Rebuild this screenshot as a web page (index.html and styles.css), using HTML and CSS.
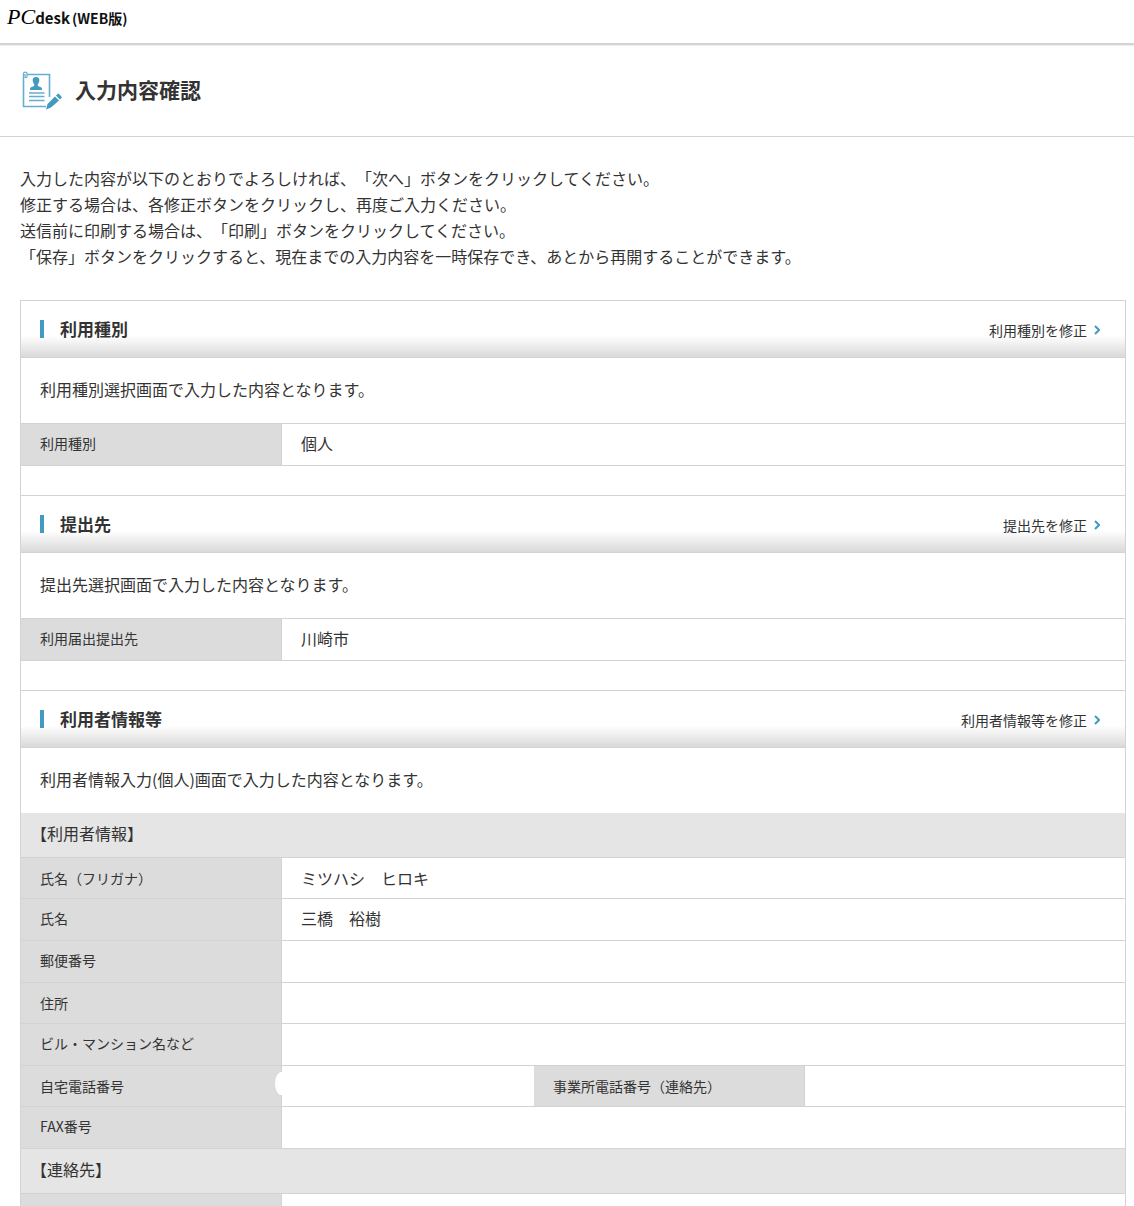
FILE: index.html
```html
<!DOCTYPE html>
<html lang="ja">
<head>
    <meta charset="UTF-8">
    <meta name="viewport" content="width=device-width, initial-scale=1.0">
    <title>入力内容確認</title>
    <link rel="stylesheet" href="styles.css">
</head>
<body>
    <header class="header">
        <div class="logo"><span class="logo-pc">PC</span><span class="logo-desk">desk</span><span class="logo-web">(WEB版)</span></div>
    </header>
    <div class="title-bar">
        <svg class="title-icon" width="40" height="40" viewBox="0 0 40 40" fill="none">
            <path d="M5 3.5H27.500V26M24 35.5H1.5V6" stroke="#66aecb" stroke-width="1.6"/>
            <path d="M1.5 7V2.5C1.5 .6 5 .6 5 2.5V5.5C5 7 3 7 3 5.5V3" stroke="#66aecb" stroke-width="1.2"/>
            <path d="M14 6C16.500 6 17.500 7.500 17.300 9.500C17.200 11.500 16.300 12.500 15.800 13.300V15L19 16.300C20 16.800 20 18 20 19H8C8 18 8 16.800 9 16.300L12.200 15V13.300C11.700 12.500 10.800 11.500 10.700 9.500C10.500 7.500 11.500 6 14 6Z" fill="#439ac0"/>
            <path d="M7 22H22.500M7 25.500H22.500M7 29.500H22.500" stroke="#66aecb" stroke-width="1.5"/>
            <path d="M24 38.500L25.500 33L33 25.500L37 29.500L29 36.500ZM34 24.500L35.500 23C36.500 22 40.500 26 39.500 27L38 28.500Z" fill="#439ac0"/>
        </svg>
        <h1>入力内容確認</h1>
    </div>
    <main class="container">
        <p class="lead">
            入力した内容が以下のとおりでよろしければ、「次へ」ボタンをクリックしてください。<br>
            修正する場合は、各修正ボタンをクリックし、再度ご入力ください。<br>
            送信前に印刷する場合は、「印刷」ボタンをクリックしてください。<br>
            「保存」ボタンをクリックすると、現在までの入力内容を一時保存でき、あとから再開することができます。
        </p>
        <div class="box">
            <section class="section">
                <div class="section-head">
                    <h2>利用種別</h2>
                    <a href="#" class="edit-link">利用種別を修正<svg width="6" height="10" viewBox="0 0 6 10" fill="none"><path d="M1 1L5 5L1 9" stroke="#439ac0" stroke-width="2"/></svg></a>
                </div>
                <p class="note">利用種別選択画面で入力した内容となります。</p>
                <table class="form-table">
                    <colgroup><col class="col-label"><col></colgroup>
                    <tr><th scope="row">利用種別</th><td>個人</td></tr>
                </table>
            </section>
            <section class="section">
                <div class="section-head">
                    <h2>提出先</h2>
                    <a href="#" class="edit-link">提出先を修正<svg width="6" height="10" viewBox="0 0 6 10" fill="none"><path d="M1 1L5 5L1 9" stroke="#439ac0" stroke-width="2"/></svg></a>
                </div>
                <p class="note">提出先選択画面で入力した内容となります。</p>
                <table class="form-table">
                    <colgroup><col class="col-label"><col></colgroup>
                    <tr><th scope="row">利用届出提出先</th><td>川崎市</td></tr>
                </table>
            </section>
            <section class="section">
                <div class="section-head">
                    <h2>利用者情報等</h2>
                    <a href="#" class="edit-link">利用者情報等を修正<svg width="6" height="10" viewBox="0 0 6 10" fill="none"><path d="M1 1L5 5L1 9" stroke="#439ac0" stroke-width="2"/></svg></a>
                </div>
                <p class="note">利用者情報入力(個人)画面で入力した内容となります。</p>
                <table class="form-table user-table">
                    <colgroup><col class="col-label"><col class="col-tel"><col class="col-label2"><col></colgroup>
                    <tr class="category"><th colspan="4">【利用者情報】</th></tr>
                    <tr class="short"><th scope="row">氏名（フリガナ）</th><td colspan="3">ミツハシ　ヒロキ</td></tr>
                    <tr><th scope="row">氏名</th><td colspan="3">三橋　裕樹</td></tr>
                    <tr><th scope="row">郵便番号</th><td colspan="3"></td></tr>
                    <tr class="short"><th scope="row">住所</th><td colspan="3"></td></tr>
                    <tr><th scope="row">ビル・マンション名など</th><td colspan="3"></td></tr>
                    <tr class="short"><th scope="row">自宅電話番号</th><td class="masked"></td><th scope="row">事業所電話番号（連絡先）</th><td></td></tr>
                    <tr><th scope="row">FAX番号</th><td colspan="3"></td></tr>
                    <tr class="category"><th colspan="4">【連絡先】</th></tr>
                    <tr><th></th><td colspan="3"></td></tr>
                </table>
            </section>
        </div>
    </main>
</body>
</html>
```
FILE: styles.css
```css
html, body {
    height: 100%;
    margin: 0;
    padding: 0;
    overflow: hidden;
}
body {
    font-family: "Noto Sans CJK JP", sans-serif;
    font-size: 16px;
    font-weight: 400;
    line-height: 26px;
    color: #333;
    background-color: #fff;
    text-spacing-trim: space-all;
}
.header {
    height: 43px;
    padding-left: 7px;
    border-bottom: 2px solid #d3d3d3;
    box-shadow: 0 1px 1px #eee;
}
.logo {
    display: flex;
    align-items: baseline;
    padding-top: 4px;
    font-weight: bold;
    font-size: 15px;
    color: #111;
}
.logo-pc {
    font-family: "Liberation Serif", serif;
    font-style: italic;
    font-weight: normal;
    font-size: 22px;
    color: #000;
}
.logo-web {
    font-size: 14px;
    margin-left: 2px;
}
.title-bar {
    display: flex;
    align-items: center;
    gap: 13px;
    height: 91px;
    padding-left: 22px;
    border-bottom: 1px solid #d3d3d3;
}
.title-bar h1 {
    margin: 0;
    padding-bottom: 4px;
    font-size: 21px;
    font-weight: bold;
}
.container {
    padding: 28px 8px 0 20px;
}
.lead {
    margin: 0 0 31px;
}
.box {
    border: 1px solid #d3d3d3;
}
.section + .section {
    margin-top: 29px;
    border-top: 1px solid #d3d3d3;
}
.section-head {
    display: flex;
    justify-content: space-between;
    align-items: center;
    height: 56px;
    padding: 0 25px 0 19px;
    background: linear-gradient(#fff 62%, #d9d9d9);
    border-bottom: 1px solid #d3d3d3;
}
.section-head h2 {
    display: flex;
    align-items: center;
    margin: 0;
    font-size: 17px;
    font-weight: bold;
}
.section-head h2::before {
    content: "";
    width: 4px;
    height: 18px;
    margin-right: 16px;
    background-color: #439ac0;
}
.edit-link {
    display: flex;
    align-items: center;
    gap: 7px;
    padding-top: 2px;
    font-size: 14px;
    color: #333;
    text-decoration: none;
}
.note {
    margin: 0;
    padding: 18px 19px 21px;
}
.form-table {
    width: 100%;
    table-layout: fixed;
    border-collapse: separate;
    border-spacing: 0;
    border-top: 1px solid #d3d3d3;
}
.col-label {
    width: 261px;
}
.col-tel {
    width: 252px;
}
.col-label2 {
    width: 271px;
}
.form-table th,
.form-table td {
    box-sizing: border-box;
    height: 42px;
    padding: 0 19px 3px;
    border-bottom: 1px solid #d3d3d3;
    text-align: left;
}
.form-table th {
    font-size: 14px;
    font-weight: 400;
    background-color: #dcdcdc;
    border-right: 1px solid #d3d3d3;
}
.form-table .short th,
.form-table .short td {
    height: 41px;
    padding-bottom: 1px;
}
.form-table .category th {
    height: 45px;
    padding: 0 10px 4px;
    font-size: 16px;
    background-color: #e5e5e5;
    border-right: none;
}
.form-table.user-table {
    border-top: none;
}
/* 電話番号は非表示 */
.masked {
    position: relative;
}
.masked::before {
    content: "";
    position: absolute;
    left: -7px;
    top: 6px;
    width: 7px;
    height: 23px;
    background-color: #fff;
    border-radius: 7px 0 0 7px / 12px 0 0 12px;
}
```
